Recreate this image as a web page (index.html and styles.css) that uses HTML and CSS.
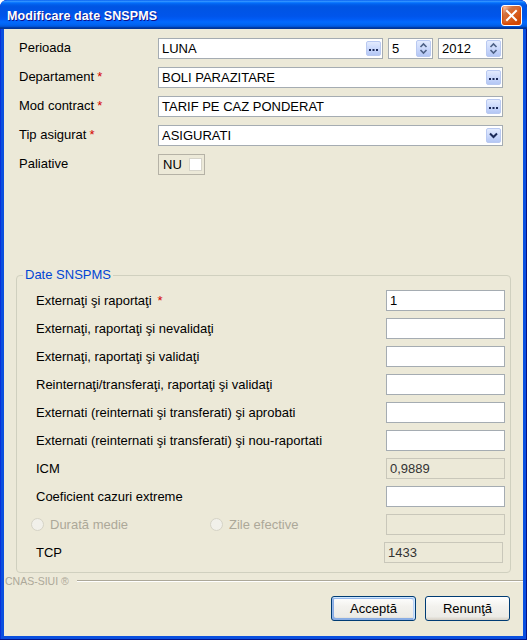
FILE: index.html
```html
<!DOCTYPE html>
<html lang="ro">
<head>
<meta charset="utf-8">
<title>Modificare date SNSPMS</title>
<link rel="stylesheet" href="styles.css">
</head>
<body>
<div class="window">
  <div class="titlebar">
    <span class="title">Modificare date SNSPMS</span>
    <button class="close" aria-label="Închide"><svg width="13" height="13" viewBox="0 0 13 13"><path d="M2 2 L11 11 M11 2 L2 11" stroke="#fff" stroke-width="2" stroke-linecap="square"/></svg></button>
  </div>
  <div class="client">
    <div class="form">
      <div class="lbl">Perioada</div>
      <div class="ctrl-row">
        <div class="field w-luna"><span class="val">LUNA</span><span class="mini"><svg width="9" height="3" viewBox="0 0 9 3"><rect x="0" y="0" width="2" height="2" fill="#1c2a58"/><rect x="3.5" y="0" width="2" height="2" fill="#1c2a58"/><rect x="7" y="0" width="2" height="2" fill="#1c2a58"/></svg></span></div>
        <div class="field w-month"><span class="val">5</span><span class="spinbtn"><svg width="9" height="13" viewBox="0 0 9 13"><path d="M1.5 5 L4.5 2 L7.5 5 M1.5 8 L4.5 11 L7.5 8" fill="none" stroke="#4d6185" stroke-width="1.6"/></svg></span></div>
        <div class="field w-year"><span class="val">2012</span><span class="spinbtn"><svg width="9" height="13" viewBox="0 0 9 13"><path d="M1.5 5 L4.5 2 L7.5 5 M1.5 8 L4.5 11 L7.5 8" fill="none" stroke="#4d6185" stroke-width="1.6"/></svg></span></div>
      </div>

      <div class="lbl">Departament<span class="req">*</span></div>
      <div class="field"><span class="val">BOLI PARAZITARE</span><span class="mini"><svg width="9" height="3" viewBox="0 0 9 3"><rect x="0" y="0" width="2" height="2" fill="#1c2a58"/><rect x="3.5" y="0" width="2" height="2" fill="#1c2a58"/><rect x="7" y="0" width="2" height="2" fill="#1c2a58"/></svg></span></div>

      <div class="lbl">Mod contract<span class="req">*</span></div>
      <div class="field"><span class="val">TARIF PE CAZ PONDERAT</span><span class="mini"><svg width="9" height="3" viewBox="0 0 9 3"><rect x="0" y="0" width="2" height="2" fill="#1c2a58"/><rect x="3.5" y="0" width="2" height="2" fill="#1c2a58"/><rect x="7" y="0" width="2" height="2" fill="#1c2a58"/></svg></span></div>

      <div class="lbl">Tip asigurat<span class="req">*</span></div>
      <div class="field"><span class="val">ASIGURATI</span><span class="mini drop"><svg width="9" height="7" viewBox="0 0 9 7"><path d="M1 1.5 L4.5 5 L8 1.5" fill="none" stroke="#1c2a58" stroke-width="2"/></svg></span></div>

      <div class="lbl">Paliative</div>
      <div class="pal-row"><div class="pal"><span>NU</span><span class="cb"></span></div></div>
    </div>

    <fieldset class="group">
      <legend>Date SNSPMS</legend>
      <div class="rows">
        <div class="grow"><span>Externaţi şi raportaţi<span class="req wide">*</span></span><div class="tb">1</div></div>
        <div class="grow"><span>Externaţi, raportaţi şi nevalidaţi</span><div class="tb"></div></div>
        <div class="grow"><span>Externaţi, raportaţi şi validaţi</span><div class="tb"></div></div>
        <div class="grow"><span>Reinternaţi/transferaţi, raportaţi şi validaţi</span><div class="tb"></div></div>
        <div class="grow"><span>Externati (reinternati şi transferati) şi aprobati</span><div class="tb"></div></div>
        <div class="grow"><span>Externati (reinternati şi transferati) şi nou-raportati</span><div class="tb"></div></div>
        <div class="grow"><span>ICM</span><div class="tb dis">0,9889</div></div>
        <div class="grow"><span>Coeficient cazuri extreme</span><div class="tb"></div></div>
        <div class="grow">
          <div class="radios">
            <span class="radio first"><span class="rc"></span>Durată medie</span>
            <span class="radio"><span class="rc"></span>Zile efective</span>
          </div>
          <div class="tb dis"></div>
        </div>
        <div class="grow"><span>TCP</span><div class="tb dis tcp">1433</div></div>
      </div>
    </fieldset>

    <div class="brand"><span>CNAS-SIUI ®</span><span class="line"></span></div>

    <div class="buttons">
      <button class="btn default">Acceptă</button>
      <button class="btn">Renunţă</button>
    </div>
  </div>
</div>
</body>
</html>
```
FILE: styles.css
```css
* { box-sizing: border-box; }

body {
  margin: 0;
  background: #ffffff;
  font-family: "Liberation Sans", Arial, sans-serif;
  font-size: 13px;
  color: #000;
}

.window {
  width: 527px;
  height: 640px;
  display: flex;
  flex-direction: column;
  background: #0a4fdf;
  border-radius: 7px 7px 0 0;
  overflow: hidden;
  box-shadow: inset -1px -1px #00138c, inset 1px 1px #0831d9;
}

.titlebar {
  height: 29px;
  flex: none;
  display: flex;
  align-items: center;
  justify-content: space-between;
  padding: 0 5px 0 7px;
  border-radius: 7px 7px 0 0;
  background: linear-gradient(180deg, #0058ee 0%, #3593ff 4%, #288eff 6%, #127dff 8%, #036ffc 10%, #0262ee 14%, #0057e5 20%, #0054e3 24%, #0055eb 56%, #005bf5 66%, #026afe 76%, #0062ef 86%, #0052d6 92%, #0040ab 94%, #003092 100%);
}

.title {
  color: #fff;
  font-weight: bold;
  font-size: 12.5px;
  letter-spacing: 0.1px;
  text-shadow: 1px 1px #0f1089;
  padding-top: 3px;
}

.close {
  width: 21px;
  height: 21px;
  padding: 0;
  margin-top: 2px;
  border: 1px solid #fff;
  border-radius: 3px;
  display: flex;
  align-items: center;
  justify-content: center;
  background: radial-gradient(circle at 90% 90%, #cc4600 0%, #dc6527 55%, #cd7546 70%, #ffccb2 90%, #fff 100%);
  box-shadow: inset 0 -1px 2px 1px #da4600;
}

.client {
  flex: 1;
  margin: 0 4px 4px;
  background: #ece9d8;
  display: flex;
  flex-direction: column;
  padding: 9px 12px 15px;
}

.form {
  display: grid;
  grid-template-columns: 139px 345px;
  grid-auto-rows: 21px;
  row-gap: 8px;
  padding-left: 3px;
}

.lbl {
  display: flex;
  align-items: center;
  padding-bottom: 2px;
  white-space: nowrap;
}

.req {
  color: #d40000;
  margin-left: 3px;
}

.req.wide { margin-left: 6px; }

.ctrl-row {
  display: flex;
  gap: 5px;
}

.field {
  height: 21px;
  border: 1px solid #a5acb2;
  background: #fff;
  display: flex;
  align-items: center;
  padding: 0 1px 0 3px;
  white-space: nowrap;
}

.field .val { flex: 1; }

.w-luna { width: 225px; }
.w-month { width: 45px; }
.w-year { width: 65px; }

.mini {
  width: 15px;
  height: 15px;
  border: 1px solid #b9c9f1;
  border-radius: 2px;
  background: linear-gradient(180deg, #e3ebfe 0%, #c7d6fb 60%, #b4c7f4 100%);
  display: flex;
  align-items: flex-end;
  justify-content: center;
  padding-bottom: 3px;
}

.mini.drop {
  align-items: center;
  padding-bottom: 0;
}

.spinbtn {
  width: 15px;
  height: 17px;
  border: 1px solid #b9c9f1;
  border-radius: 2px;
  background: linear-gradient(180deg, #e3ebfe 0%, #c7d6fb 60%, #b4c7f4 100%);
  display: flex;
  align-items: center;
  justify-content: center;
}

.pal-row { display: flex; }

.pal {
  width: 47px;
  height: 21px;
  border: 1px solid #b5b2a6;
  display: flex;
  align-items: center;
  padding-left: 4px;
  gap: 7px;
}

.cb {
  width: 13px;
  height: 13px;
  background: #fff;
  border: 1px solid #d6d4ca;
}

.group {
  margin: auto 0 0;
  padding: 8px 5px 9px 19px;
  border: 1px solid #d0d0bf;
  border-radius: 4px;
  min-width: 0;
}

.group legend {
  margin-left: -13px;
  padding: 0 2px;
  color: #0046d5;
  line-height: 14px;
}

.rows {
  display: flex;
  flex-direction: column;
  gap: 7px;
}

.grow {
  height: 21px;
  display: flex;
  align-items: center;
  justify-content: space-between;
  white-space: nowrap;
}

.tb {
  width: 119px;
  height: 21px;
  border: 1px solid #a5acb2;
  background: #fff;
  padding-left: 3px;
  display: flex;
  align-items: center;
}

.tb.dis {
  background: #ece9d8;
  border-color: #c9c7ba;
  color: #333;
}

.tb.tcp { margin-right: 2px; }

.radios {
  display: flex;
  margin-left: -5px;
  color: #aca899;
}

.radio {
  display: flex;
  align-items: center;
  gap: 6px;
}

.radio.first { width: 179px; }

.rc {
  width: 13px;
  height: 13px;
  border-radius: 50%;
  border: 1px solid #d5d3c6;
  background: #f1f0ea;
}

.brand {
  margin: 0 -12px;
  height: 16px;
  padding-left: 1px;
  display: flex;
  align-items: center;
  gap: 8px;
  color: #aca899;
  font-size: 10.5px;
}

.brand .line {
  flex: 1;
  border-top: 1px solid #aca899;
  border-bottom: 1px solid #fff;
}

.buttons {
  display: flex;
  justify-content: flex-end;
  gap: 9px;
  margin-top: 7px;
  padding-right: 1px;
}

.btn {
  width: 85px;
  height: 25px;
  font-family: "Liberation Sans", Arial, sans-serif;
  font-size: 13px;
  color: #000;
  border: 1px solid #003c74;
  border-radius: 3px;
  background: linear-gradient(180deg, #fff 0%, #f3f2ee 40%, #ecebe6 85%, #d6d0c5 100%);
  padding: 0;
}

.btn.default {
  box-shadow: inset -1px 1px #cee7ff, inset 1px 2px #98b8ea, inset -2px 2px #bcd4f6, inset 1px -1px #89ade4, inset 2px -2px #89ade4;
}
```
